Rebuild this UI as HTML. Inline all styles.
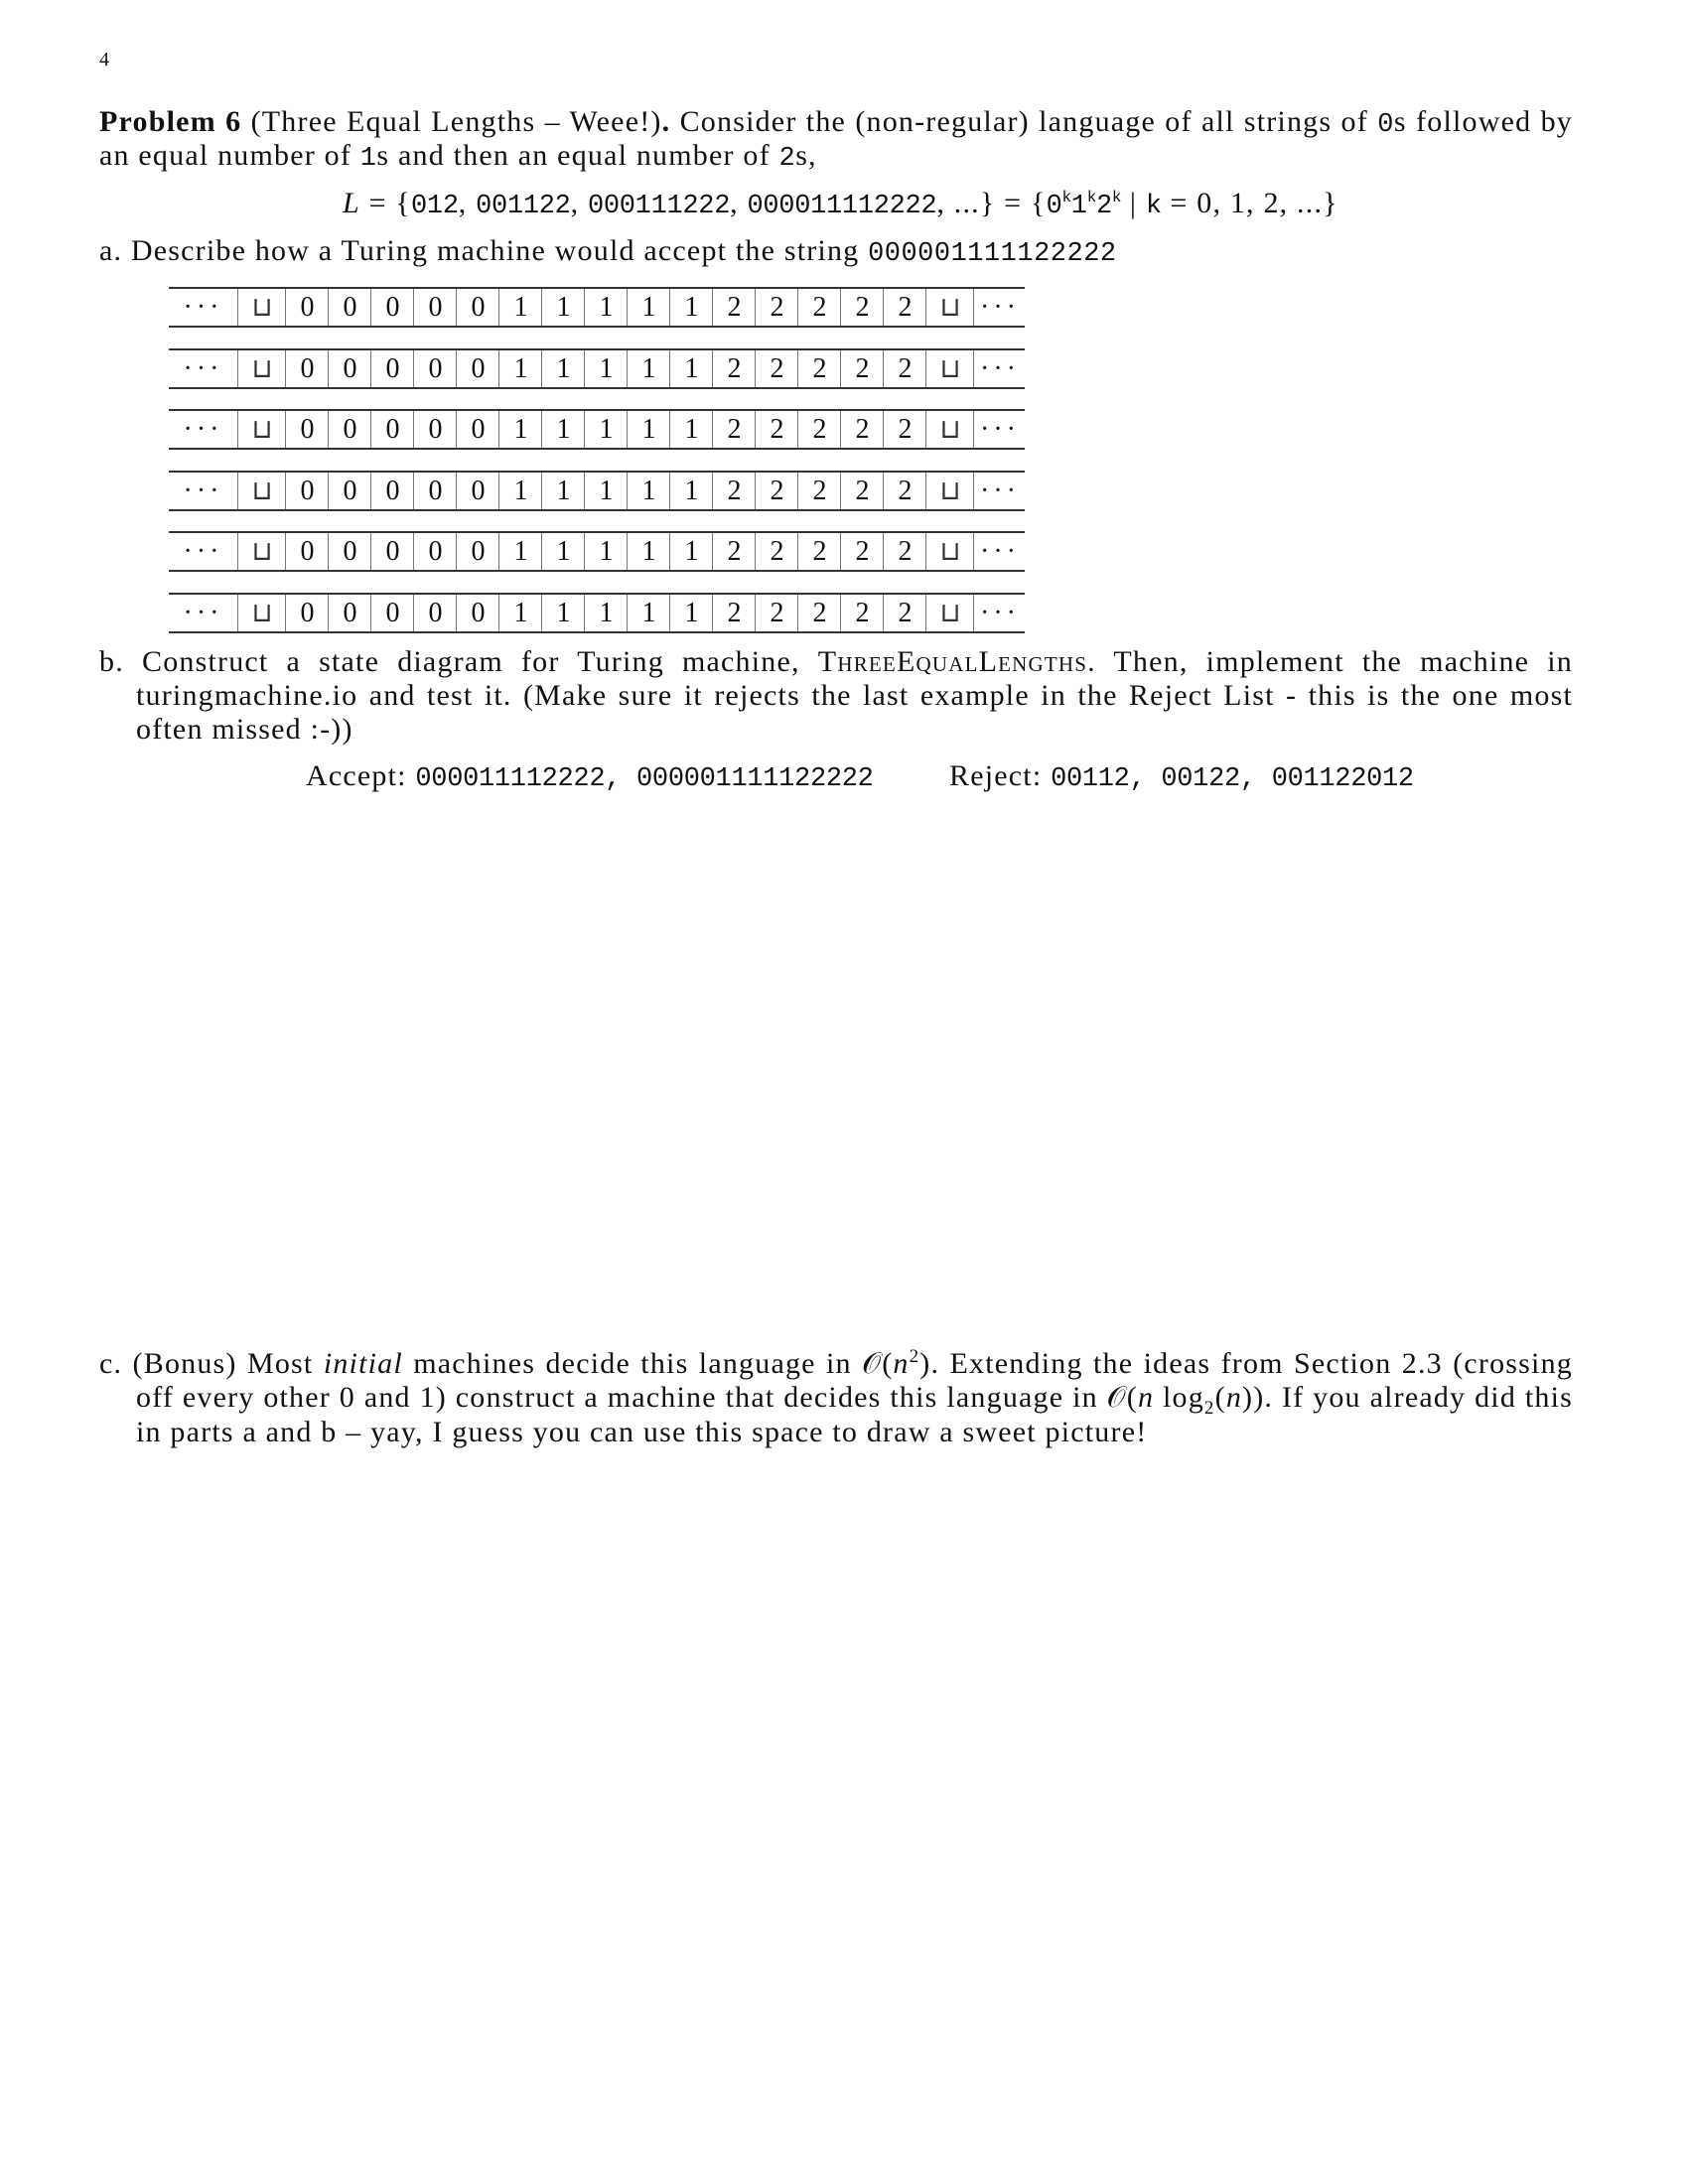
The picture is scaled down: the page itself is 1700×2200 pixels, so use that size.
<!DOCTYPE html>
<html><head><meta charset="utf-8"><style>
html,body{margin:0;padding:0;background:#fff;}
body{width:1700px;height:2200px;position:relative;overflow:hidden;font-family:"Liberation Serif",serif;color:#111;font-size:30px;letter-spacing:1.2px;}
.l{position:absolute;left:100px;width:1484px;line-height:35px;white-space:nowrap;}
.j{text-align:justify;text-align-last:justify;white-space:normal;}
.in{left:137px;width:1447px;}
.tt{font-family:"Liberation Mono",monospace;font-size:27px;letter-spacing:0.5px;}
.eq .tt{letter-spacing:-0.3px;}
.sc{font-variant:small-caps;}
sup,sub{line-height:0;}
.tape{position:absolute;left:170px;width:862px;height:37px;border-top:2px solid #333;border-bottom:2px solid #333;letter-spacing:0;}
.c{position:absolute;top:0;height:37px;border-left:1.5px solid #777;text-align:center;line-height:37px;font-size:28px;}
.bl{font-size:27px;color:#333;}
</style></head><body>
<div class="l" style="top:43px;font-size:20px;">4</div>
<div class="l j" style="top:105px;"><b>Problem 6</b> (Three Equal Lengths – Weee!)<b>.</b> Consider the (non-regular) language of all strings of <span class="tt">0</span>s followed by</div>
<div class="l" style="top:139px;">an equal number of <span class="tt">1</span>s and then an equal number of <span class="tt">2</span>s,</div>
<div class="l eq" style="top:187px;left:345px;width:1000px;"><i>L</i> = {<span class="tt">012</span>, <span class="tt">001122</span>, <span class="tt">000111222</span>, <span class="tt">000011112222</span>, ...} = {<span class="tt">0</span><sup class="tt" style="font-size:16px">k</sup><span class="tt">1</span><sup class="tt" style="font-size:16px">k</sup><span class="tt">2</span><sup class="tt" style="font-size:16px">k</sup> | <span class="tt">k</span> = 0, 1, 2, ...}</div>
<div class="l" style="top:235px;">a. Describe how a Turing machine would accept the string <span class="tt">000001111122222</span></div>

<div id="tapes"></div>
<script>
var h='';var tops=[289,351,412,474,535,597];
var syms=['0','0','0','0','0','1','1','1','1','1','2','2','2','2','2'];
tops.forEach(function(t){
 h+='<div class="tape" style="top:'+t+'px">';
 h+='<div class="c" style="left:0;width:69px;border-left:none;letter-spacing:4px">&middot;&middot;&middot;</div>';
 h+='<div class="c" style="left:69px;width:48px;"><span class="bl">&#x2294;</span></div>';
 for(var i=0;i<15;i++){h+='<div class="c" style="left:'+(117+i*43)+'px;width:43px;">'+syms[i]+'</div>';}
 h+='<div class="c" style="left:762px;width:48px;"><span class="bl">&#x2294;</span></div>';
 h+='<div class="c" style="left:810px;width:52px;letter-spacing:4px">&middot;&middot;&middot;</div>';
 h+='</div>';
});
document.getElementById('tapes').innerHTML=h;
</script>

<div class="l j" style="top:649px;">b. Construct a state diagram for Turing machine, <span class="sc">ThreeEqualLengths</span>. Then, implement the machine in</div>
<div class="l j in" style="top:683px;">turingmachine.io and test it. (Make sure it rejects the last example in the Reject List - this is the one most</div>
<div class="l in" style="top:717px;">often missed :-))</div>
<div class="l" style="top:764px;left:308px;">Accept: <span class="tt" style="letter-spacing:-0.3px">000011112222, 000001111122222</span></div>
<div class="l" style="top:764px;left:956px;">Reject: <span class="tt" style="letter-spacing:-0.3px">00112, 00122, 001122012</span></div>

<div class="l j" style="top:1356px;">c. (Bonus) Most <i>initial</i> machines decide this language in 𝒪(<i>n</i><sup style="font-size:19px">2</sup>). Extending the ideas from Section 2.3 (crossing</div>
<div class="l j in" style="top:1390px;">off every other 0 and 1) construct a machine that decides this language in 𝒪(<i>n</i> log<sub style="font-size:19px">2</sub>(<i>n</i>)). If you already did this</div>
<div class="l in" style="top:1425px;">in parts a and b – yay, I guess you can use this space to draw a sweet picture!</div>
</body></html>
